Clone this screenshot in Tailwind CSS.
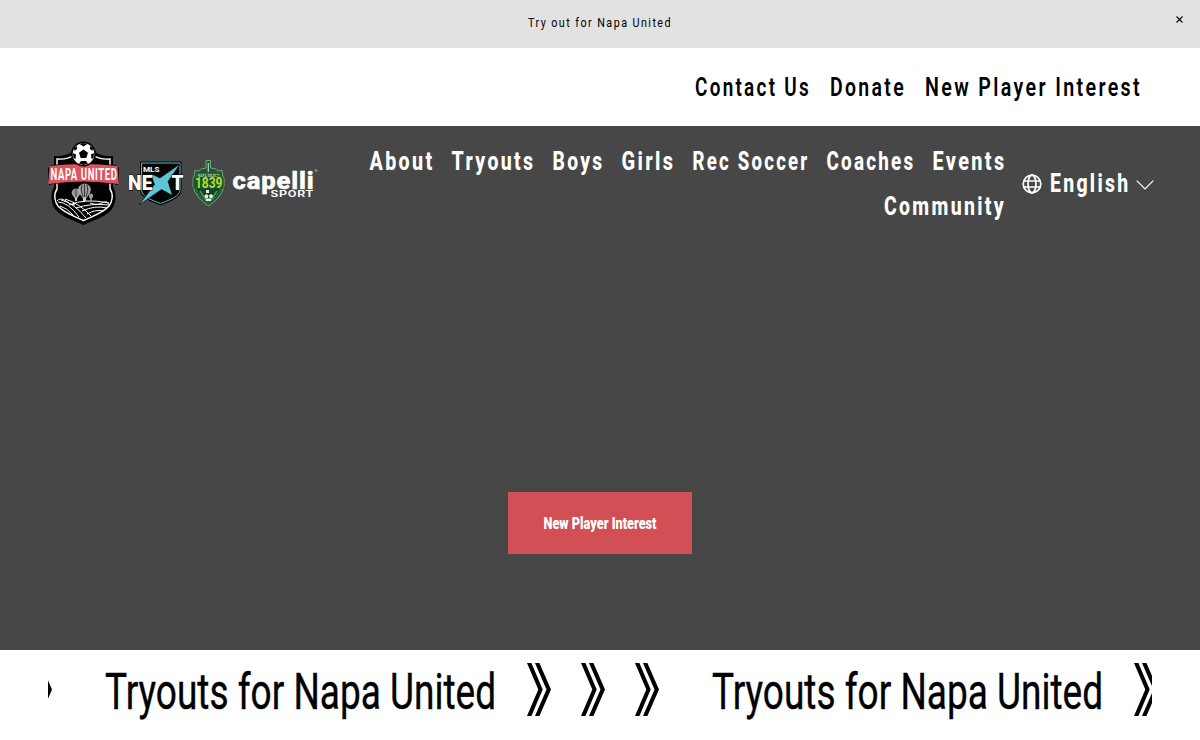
<!DOCTYPE html>
<html lang="en">
<head>
    <meta charset="UTF-8">
    <meta name="viewport" content="width=device-width, initial-scale=1.0">
    <title>Napa United</title>
    <script src="https://cdn.jsdelivr.net/npm/@tailwindcss/browser@4"></script>
</head>
<body class="bg-white font-['Roboto',sans-serif] h-[740px] overflow-hidden">
    <!-- Announcement bar -->
    <div class="relative h-12 bg-[#e2e2e2] flex justify-center">
        <a href="#"><svg width="146" height="44" class="block overflow-visible"><text x="1" y="27" textLength="144" lengthAdjust="spacingAndGlyphs" class="text-[13.500px] tracking-[1.8px]">Try out for Napa United</text></svg></a>
        <button class="absolute right-[17px] top-[16px]" aria-label="Close">
            <svg width="7" height="7" viewBox="0 0 7 7" stroke="#000" stroke-width="1.1" class="block"><path d="M.5 .5l6 6M6.5 .5l-6 6"/></svg>
        </button>
    </div>

    <!-- Secondary nav -->
    <nav class="h-[78px] flex justify-end gap-[18px] pr-[57px] pt-6 font-semibold text-[25px] tracking-[3px]">
        <a href="#"><svg width="117" height="32" class="block overflow-visible"><text x="0" y="24" textLength="116" lengthAdjust="spacingAndGlyphs">Contact Us</text></svg></a>
        <a href="#"><svg width="77" height="32" class="block overflow-visible"><text x="0" y="24" textLength="76" lengthAdjust="spacingAndGlyphs">Donate</text></svg></a>
        <a href="#"><svg width="218" height="32" class="block overflow-visible"><text x="0" y="24" textLength="217" lengthAdjust="spacingAndGlyphs">New Player Interest</text></svg></a>
    </nav>

    <!-- Hero -->
    <section class="h-[524px] bg-[#474747] flex flex-col">
        <header class="flex pl-12 pr-[46px] pt-[14px] text-white">
            <!-- Club and partner logos -->
            <svg width="272" height="88" viewBox="48 140 272 88" class="shrink-0">
                <!-- Napa United crest -->
                <path d="M54 156Q66 157 73 151H94Q101 157 113 156V187C117 193 116 204 112 209C106 217 94 220 83.500 225C73 220 61 217 55 209C51 204 50 193 54 187Z" fill="#000"/>
                <path d="M57 159Q67 160 74 155H93Q100 160 110 159V189C114 195 112 202 109 206C103 213 93 216 83.500 220.500C74 216 64 213 58 206C55 202 53 195 57 189Z" fill="#000" stroke="#fff" stroke-width="1.400"/>
                <g fill="none" stroke="#fff" stroke-width="1">
                    <path d="M58 202Q68 202 79 217M61 200Q74 203 86 218M65 199Q79 203 91 216M69 205Q85 198 109 203M76 208Q91 203 109 205M82 211Q95 205 107 208M87 214Q96 209 104 211M60 206Q67 208 73 215"/>
                    <path d="M57 201Q60 197 66 201Q70 205 75 205M90 203Q98 206 104 202Q107 201 109 204"/>
                </g>
                <g fill="#999" stroke="#ddd" stroke-width=".6">
                    <path d="M84.500 184C78 184 77 191 81 195L83 198H86L88 195C92 191 91 184 84.500 184Z"/>
                    <path d="M76 189C72 189 71 193 73.500 196L75 198H77L78.500 196C81 193 80 189 76 189Z"/>
                    <path d="M91 194C88.500 194 89 197 91 199C93 197 93.500 194 91 194Z"/>
                </g>
                <path d="M82 184Q80 190 83 197M84.500 184V197M87 184Q89 190 86 197M76 189V197" stroke="#222" stroke-width=".8" fill="none"/>
                <path d="M83 198h3v3h-3zM75 198h2v3h-2zM90.500 199h1v2h-1z" fill="#ccc"/>
                <path d="M48 168L51 165Q83 162 116 165L119 168L118 185L114 184Q83 180 53 184L49 185Z" fill="#000"/>
                <path d="M49.500 166Q83 162 117.500 166L118.500 184Q83 179 48.500 184Z" fill="#e0525f"/>
                <text x="50.500" y="179.500" textLength="67" lengthAdjust="spacingAndGlyphs" fill="#fff" class="text-[16.500px] font-bold tracking-[1px]">NAPA UNITED</text>
                <circle cx="83.500" cy="154" r="12.500" fill="#000"/>
                <circle cx="83.500" cy="154" r="10.800" fill="#fff"/>
                <path d="M83.500 149.500L88 152.700L86.300 158H80.700L79 152.700ZM79.500 144L83.500 146.500L87.500 144L83.500 143ZM73 153L76 154.500L75.500 159L73.500 158ZM94 153L91 154.500L91.500 159L93.500 158ZM79 163.500L81 161H86L88 163.500L83.500 165ZM74 148L77 146L77 149L74.500 151ZM93 148L90 146L90 149L92.500 151Z" fill="#000"/>

                <!-- MLS Next -->
                <path d="M140 161.500H181.500V190C181.500 197 172 201 160.500 205.500C149 201 140 197 140 190Z" fill="#000"/>
                <path d="M141.500 163H180V190C180 196 171 199.500 160.500 203.500C150 199.500 141.500 196 141.500 190Z" fill="#050505" stroke="#56bfd0" stroke-width="1"/>
                <path d="M180 164L168 181.500L172.500 195.500L161.500 189.500L139 205L154.500 184.500L150.500 173.500L160 178Z" fill="#61c5d8" stroke="#000" stroke-width=".6"/>
                <g fill="#fff" stroke="#000" stroke-width="1" paint-order="stroke">
                    <text x="143" y="171.500" textLength="16.500" lengthAdjust="spacingAndGlyphs" class="text-[8px] font-bold">MLS</text>
                    <text x="128" y="190" textLength="24.500" lengthAdjust="spacingAndGlyphs" class="text-[20px] font-black">NE</text>
                    <text x="171.500" y="190" textLength="12" lengthAdjust="spacingAndGlyphs" class="text-[20px] font-black">T</text>
                </g>

                <!-- 1839 badge -->
                <path d="M206 160.500H210.500V168Q216 168 218 171L222 170.500Q222 176 224 178V186Q223 192 218 198Q213 203 208.500 206Q204 203 199 198Q194 192 193 186V178Q195 176 195 170.500L199 171Q201 168 206 168Z" fill="#1c5735" stroke="#86b98c" stroke-width=".8"/>
                <path d="M208.300 163V172" stroke="#b7d6b9" stroke-width="1.200"/>
                <path d="M198 174H219Q220 177 222 178V186Q219 196 208.500 203Q198 196 195 186V178Q197 177 198 174Z" fill="#134429" stroke="#4d9755" stroke-width=".6"/>
                <path d="M193.500 178H223.500V188.500H193.500Z" fill="#1b552d"/>
                <text x="198" y="176.500" textLength="21" lengthAdjust="spacingAndGlyphs" fill="#b8d7b5" class="text-[4px] font-bold">NAPA SELECT</text>
                <text x="195" y="188" textLength="27.500" lengthAdjust="spacingAndGlyphs" fill="#b2e032" class="text-[14px] font-bold">1839</text>
                <path d="M200 191L206 200M217 191L211 200" stroke="#4d9755" stroke-width="1.500"/>
                <path d="M206 190h3v3h-3zM204.500 195.500l2-1.500l2 1.500l-.7 2.500h-2.600zM209 195.500l2-1.500l2 1.500l-.7 2.500h-2.600zM206 198.500h5v2.500h-5z" fill="#e6f0e6"/>

                <!-- Capelli Sport -->
                <g fill="#fff">
                    <text x="232.500" y="189" textLength="82" lengthAdjust="spacingAndGlyphs" stroke="#fff" stroke-width=".5" class="text-[23.500px] font-extrabold tracking-[.8px]">capelli</text>
                    <text x="270.500" y="197" textLength="43.500" lengthAdjust="spacingAndGlyphs" stroke="#474747" stroke-width="1" paint-order="stroke" class="text-[8.500px] font-semibold tracking-[.5px]">SPORT</text>
                    <circle cx="316" cy="170.500" r="1" fill="none" stroke="#ccc" stroke-width=".6"/>
                </g>
            </svg>

            <!-- Main nav -->
            <nav class="flex-1 flex flex-wrap justify-end content-start gap-x-[17px] gap-y-[13px] pt-[6px] font-extrabold text-[25px] tracking-[3px] fill-white">
                <a href="#"><svg width="65" height="32" class="block overflow-visible"><text x="-.5" y="24" textLength="65" lengthAdjust="spacingAndGlyphs">About</text></svg></a>
                <a href="#"><svg width="84" height="32" class="block overflow-visible"><text x="-.5" y="24" textLength="84" lengthAdjust="spacingAndGlyphs">Tryouts</text></svg></a>
                <a href="#"><svg width="52" height="32" class="block overflow-visible"><text x="-.5" y="24" textLength="52" lengthAdjust="spacingAndGlyphs">Boys</text></svg></a>
                <a href="#"><svg width="54" height="32" class="block overflow-visible"><text x="-.5" y="24" textLength="54" lengthAdjust="spacingAndGlyphs">Girls</text></svg></a>
                <a href="#"><svg width="117" height="32" class="block overflow-visible"><text x="-.5" y="24" textLength="117" lengthAdjust="spacingAndGlyphs">Rec Soccer</text></svg></a>
                <a href="#"><svg width="89" height="32" class="block overflow-visible"><text x="-.5" y="24" textLength="89" lengthAdjust="spacingAndGlyphs">Coaches</text></svg></a>
                <a href="#"><svg width="74" height="32" class="block overflow-visible"><text x="-.5" y="24" textLength="74" lengthAdjust="spacingAndGlyphs">Events</text></svg></a>
                <a href="#"><svg width="123" height="32" class="block overflow-visible"><text x="0" y="24" textLength="122" lengthAdjust="spacingAndGlyphs">Community</text></svg></a>
            </nav>

            <!-- Language picker -->
            <div class="flex items-center h-[88px] pl-[15px] font-extrabold text-[25px] tracking-[3px]">
                <svg width="20" height="20" viewBox="0 0 20 20" fill="none" stroke="#fff" stroke-width="1.700" class="-mt-px"><circle cx="10" cy="10" r="8.800"/><ellipse cx="10" cy="10" rx="4" ry="8.800"/><path d="M1.500 7H18.500M1.500 13H18.500"/></svg>
                <svg width="81" height="32" class="ml-2 fill-white overflow-visible"><text x="0" y="24" textLength="80.500" lengthAdjust="spacingAndGlyphs">English</text></svg>
                <svg width="18" height="10" viewBox="0 0 18 10" fill="none" stroke="#fff" stroke-width="1.200" class="ml-[5px] mt-[2px]"><path d="M.7 .7L9 9L17.300 .7"/></svg>
            </div>
        </header>

        <a href="#" class="mx-auto mt-[264px] w-[184px] h-[62px] bg-[#d14f55] flex items-center justify-center">
            <svg width="112" height="24" class="fill-white overflow-visible"><text x="-.5" y="18" textLength="113" lengthAdjust="spacingAndGlyphs" class="text-[17px] font-black">New Player Interest</text></svg>
        </a>
    </section>

    <!-- Marquee -->
    <div class="mx-12 h-[90px] pt-[13px] overflow-hidden">
        <div class="-ml-5 flex w-max">
            <svg width="24" height="53" viewBox="0 0 24 53" class="mr-[54px] overflow-visible"><path d="M0 0H4.400L15.700 26.500L4.400 53H0L11.300 26.500ZM8 0H12.400L24 26.500L12.400 53H8L19.500 26.500Z"/></svg>
            <svg width="388" height="60" class="mr-[33px] overflow-visible"><text x="-1" y="46" textLength="391" lengthAdjust="spacingAndGlyphs" class="text-[50.500px] font-normal" stroke="#000" stroke-width=".4">Tryouts for Napa United</text></svg>
            <svg width="24" height="53" viewBox="0 0 24 53" class="mr-[30px] overflow-visible"><path d="M0 0H4.400L15.700 26.500L4.400 53H0L11.300 26.500ZM8 0H12.400L24 26.500L12.400 53H8L19.500 26.500Z"/></svg>
            <svg width="24" height="53" viewBox="0 0 24 53" class="mr-[30px] overflow-visible"><path d="M0 0H4.400L15.700 26.500L4.400 53H0L11.300 26.500ZM8 0H12.400L24 26.500L12.400 53H8L19.500 26.500Z"/></svg>
            <svg width="24" height="53" viewBox="0 0 24 53" class="mr-[54px] overflow-visible"><path d="M0 0H4.400L15.700 26.500L4.400 53H0L11.300 26.500ZM8 0H12.400L24 26.500L12.400 53H8L19.500 26.500Z"/></svg>
            <svg width="388" height="60" class="mr-[33px] overflow-visible"><text x="-1" y="46" textLength="391" lengthAdjust="spacingAndGlyphs" class="text-[50.500px] font-normal" stroke="#000" stroke-width=".4">Tryouts for Napa United</text></svg>
            <svg width="24" height="53" viewBox="0 0 24 53" class="overflow-visible"><path d="M0 0H4.400L15.700 26.500L4.400 53H0L11.300 26.500ZM8 0H12.400L24 26.500L12.400 53H8L19.500 26.500Z"/></svg>
        </div>
    </div>
</body>
</html>
